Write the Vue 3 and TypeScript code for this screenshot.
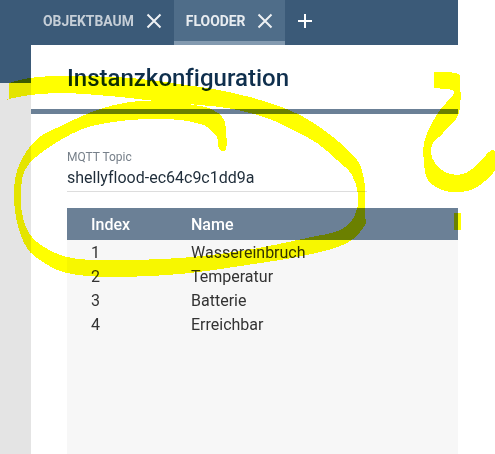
<template>
  <div class="app">
    <div class="shell">
      <header class="tabbar">
        <div
          v-for="tab in tabs"
          :key="tab.label"
          class="tab"
          :class="{ 'tab--active': tab.active }"
        >
          <span class="tab__label">{{ tab.label }}</span>
          <svg class="tab__icon" width="16" height="16" viewBox="0 0 16 16">
            <path d="M1.5 1.5 L14.5 14.5 M14.5 1.5 L1.5 14.5" />
          </svg>
        </div>
        <svg class="tab__add" width="16" height="16" viewBox="0 0 16 16">
          <path d="M8 1 V15 M1 8 H15" />
        </svg>
      </header>

      <div class="body">
        <aside class="side">
          <div class="side__top"></div>
        </aside>

        <main class="panel">
          <h1 class="panel__title">Instanzkonfiguration</h1>
          <div class="panel__rule"></div>

          <div class="field">
            <label class="field__label">MQTT Topic</label>
            <div class="field__value">shellyflood-ec64c9c1dd9a</div>
          </div>

          <div class="table">
            <div class="table__row table__row--head">
              <span>Index</span>
              <span>Name</span>
            </div>
            <div v-for="row in rows" :key="row.index" class="table__row">
              <span>{{ row.index }}</span>
              <span>{{ row.name }}</span>
            </div>
          </div>
        </main>
      </div>
    </div>

    <!-- highlighter scribble lies over the whole page -->
    <svg class="scribble" width="495" height="454" viewBox="0 0 495 454">
      <path class="scribble__fill" :d="smooth(ellipseOutline)" />
      <path class="scribble__fill" :d="smooth(hookOutline)" />
      <rect class="scribble__fill" x="454" y="213" width="7" height="17" />
    </svg>
  </div>
</template>

<script setup lang="ts">
interface Tab {
  label: string
  active: boolean
}

interface Row {
  index: number
  name: string
}

type Point = [number, number]

const tabs: Tab[] = [
  { label: 'Objektbaum', active: false },
  { label: 'Flooder', active: true }
]

const rows: Row[] = [
  { index: 1, name: 'Wassereinbruch' },
  { index: 2, name: 'Temperatur' },
  { index: 3, name: 'Batterie' },
  { index: 4, name: 'Erreichbar' }
]

// outline of the big highlighter loop, traced clockwise from the left stub
const ellipseOutline: Point[] = [
  [9, 84], [9, 83], [30, 78], [63, 76], [130, 78], [200, 87], [233, 93], [267, 102], [300, 115],
  [333, 137], [357, 160], [363, 175], [365, 190], [365, 215], [365, 225], [347, 243],
  [307, 255], [247, 265], [180, 274], [110, 277], [67, 273], [43, 262], [27, 248],
  [17, 222], [14, 190], [20, 163], [37, 139], [63, 125], [97, 110], [130, 102],
  [163, 101], [200, 106], [213, 110], [223, 118], [226, 130], [226, 149], [219, 149],
  [217, 137], [207, 127], [200, 124], [180, 120], [147, 119], [113, 122], [80, 130],
  [45, 150], [25, 170], [21, 197], [24, 222], [37, 242], [67, 257], [110, 260],
  [180, 258], [247, 250], [307, 238], [340, 230], [355, 215], [358, 195], [352, 175],
  [337, 160], [317, 143], [293, 130], [267, 118], [233, 109], [200, 105], [163, 102],
  [130, 98], [97, 95], [63, 93], [30, 95], [9, 99], [9, 98]
]

// outline of the hook on the right
const hookOutline: Point[] = [
  [434, 73], [434, 72], [447, 72], [458, 74], [460, 80], [459, 113], [443, 133], [433, 143],
  [431, 153], [435, 163], [447, 173], [463, 174], [477, 165], [489, 152], [495, 152],
  [495, 170], [477, 187], [460, 192], [442, 190], [428, 180], [424, 163], [424, 143],
  [430, 127], [440, 110], [453, 95], [452, 90], [434, 88], [434, 87]
]

// closed Catmull-Rom curve through the traced points
const smooth = (pts: Point[]): string => {
  const n = pts.length
  let d = `M${pts[0][0]} ${pts[0][1]}`
  for (let i = 0; i < n; i++) {
    const p0 = pts[(i - 1 + n) % n]
    const p1 = pts[i]
    const p2 = pts[(i + 1) % n]
    const p3 = pts[(i + 2) % n]
    const c1x = p1[0] + (p2[0] - p0[0]) / 6
    const c1y = p1[1] + (p2[1] - p0[1]) / 6
    const c2x = p2[0] - (p3[0] - p1[0]) / 6
    const c2y = p2[1] - (p3[1] - p1[1]) / 6
    d += ` C${c1x} ${c1y} ${c2x} ${c2y} ${p2[0]} ${p2[1]}`
  }
  return d + ' Z'
}
</script>

<style>
html,
body {
  margin: 0;
  background: #fff;
  overflow: hidden;
}
</style>

<style scoped>
.app {
  position: relative;
  width: 495px;
  height: 454px;
  overflow: hidden;
  font-family: Roboto, "Liberation Sans", sans-serif;
  font-variant-ligatures: none;
}

.shell {
  display: flex;
  flex-direction: column;
  width: 458px;
  height: 100%;
}

.tabbar {
  display: flex;
  align-items: stretch;
  flex: 0 0 45px;
  padding-left: 31px;
  background: #3b5a78;
}

.tab {
  display: flex;
  align-items: center;
  gap: 12px;
  height: 41px;
  padding: 0 12px;
  border-bottom: 4px solid transparent;
}

.tab--active {
  background: #4f6d89;
  border-bottom-color: #839ab0;
}

.tab__label {
  font-size: 13.9px;
  font-weight: 700;
  text-transform: uppercase;
  color: #c5ced7;
}

.tab--active .tab__label {
  color: #e8ecf0;
}

.tab__icon,
.tab__add {
  fill: none;
  stroke: #eef1f4;
  stroke-width: 2;
}

.tab__add {
  align-self: center;
  margin: 0 0 4px 12px;
  stroke: #fff;
}

.body {
  display: flex;
  flex: 1;
  min-height: 0;
}

.side {
  flex: 0 0 31px;
  background: #e4e4e4;
}

.side__top {
  height: 38px;
  background: #3b5a78;
}

.panel {
  flex: 1;
  display: flex;
  flex-direction: column;
  min-width: 0;
  background: #fff;
}

.panel__title {
  margin: 0;
  padding: 19px 0 0 36px;
  height: 45px;
  font-size: 24px;
  line-height: 28px;
  font-weight: 500;
  color: #0f2f4d;
}

.panel__rule {
  height: 5px;
  background: #6b8096;
}

.field {
  width: 300px;
  margin: 36px 0 0 36px;
  border-bottom: 1px solid #dddddd;
}

.field__label {
  display: block;
  font-size: 12px;
  line-height: 14px;
  color: #77808a;
}

.field__value {
  margin-top: 1px;
  font-size: 16px;
  line-height: 26px;
  color: #1f2d3a;
}

.table {
  flex: 1;
  margin: 16px 0 0 36px;
  background: #f7f7f7;
  font-size: 16px;
  color: #333;
}

.table__row {
  display: grid;
  grid-template-columns: 100px 1fr;
  align-items: center;
  height: 24px;
  padding-left: 24px;
}

.table__row--head {
  height: 32px;
  background: #6b8096;
  color: #fff;
  font-weight: 500;
}

.scribble {
  position: absolute;
  inset: 0;
  mix-blend-mode: multiply;
  pointer-events: none;
}

.scribble__fill {
  fill: #ffff00;
  shape-rendering: crispEdges;
}
</style>
